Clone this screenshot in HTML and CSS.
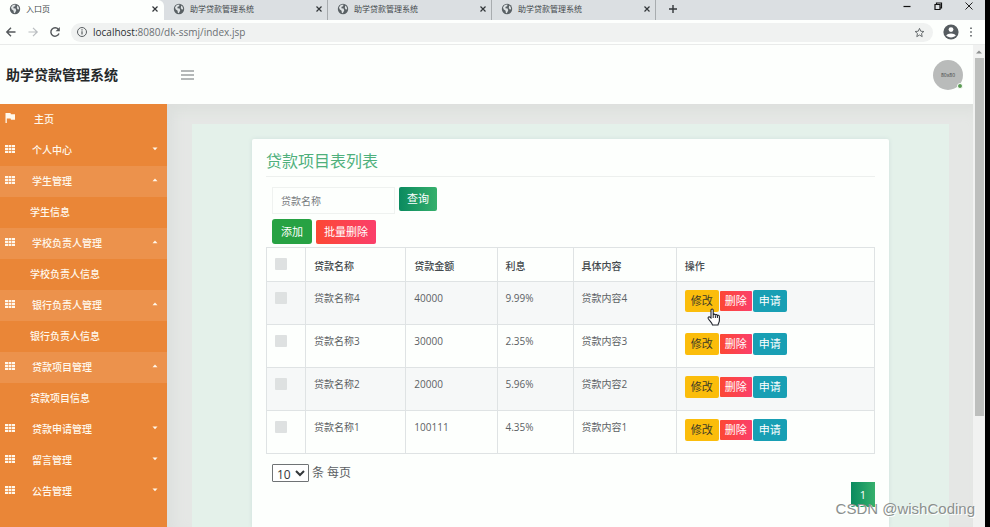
FILE: index.html
```html
<!DOCTYPE html>
<html lang="zh-CN">
<head>
<meta charset="utf-8">
<title>入口页</title>
<link rel="stylesheet" href="styles.css">
</head>
<body>
<svg class="defs" aria-hidden="true">
  <symbol id="globe" viewBox="0 0 12 12"><circle cx="6" cy="6" r="5.2" fill="#596064"/><path d="M2 4.2 3.8 2l2.6-.4-.2 1.6-1.6.6-.2 1.4 2.2.4.6 1.8-1.4 2.8-1-.4-.2-2L2.600 6.200zM8.200 2.600l1.400 1.200.6 2.400-1.400.2-1-1.400z" fill="#dfe3e5"/></symbol>
  <symbol id="x" viewBox="0 0 8 8"><path d="M1.500 1.500l5 5M6.500 1.500l-5 5" stroke="#33373a" stroke-width="1.200" fill="none"/></symbol>
  <symbol id="grid" viewBox="0 0 10 8"><path d="M0 0h3v2.200H0zM3.600 0h2.800v2.200H3.600zM7 0h3v2.200H7zM0 2.900h3v2.200H0zM3.600 2.900h2.800v2.200H3.600zM7 2.900h3v2.200H7zM0 5.800h3V8H0zM3.600 5.800h2.800V8H3.600zM7 5.800h3V8H7z" fill="#fff8ec"/></symbol>
  <symbol id="down" viewBox="0 0 6 4"><path d="M.5.5h5L3 3.200z" fill="#fff8ec"/></symbol>
  <symbol id="up" viewBox="0 0 6 4"><path d="M.5 3.200h5L3 .5z" fill="#fff8ec"/></symbol>
</svg>
<div class="screen">
  <div class="browser">
    <div class="tabs">
      <div class="tab active"><svg class="ico12"><use href="#globe"/></svg><span>入口页</span><button class="close" aria-label="关闭"><svg class="ico8"><use href="#x"/></svg></button></div>
      <div class="tab"><svg class="ico12"><use href="#globe"/></svg><span>助学贷款管理系统</span><button class="close" aria-label="关闭"><svg class="ico8"><use href="#x"/></svg></button></div>
      <div class="tab"><svg class="ico12"><use href="#globe"/></svg><span>助学贷款管理系统</span><button class="close" aria-label="关闭"><svg class="ico8"><use href="#x"/></svg></button></div>
      <div class="tab"><svg class="ico12"><use href="#globe"/></svg><span>助学贷款管理系统</span><button class="close" aria-label="关闭"><svg class="ico8"><use href="#x"/></svg></button></div>
      <button class="newtab" aria-label="新标签页"><svg width="10" height="10" viewBox="0 0 10 10"><path d="M5 1v8M1 5h8" stroke="#33373a" stroke-width="1.400"/></svg></button>
      <div class="winbtns">
        <button aria-label="最小化"><svg width="10" height="10" viewBox="0 0 10 10"><path d="M1.500 5.500h7" stroke="#111" stroke-width="1.200"/></svg></button>
        <button aria-label="还原"><svg width="10" height="10" viewBox="0 0 10 10"><path d="M2 3.500h5v5H2zM3.500 3.500V2h5v5H7" stroke="#111" stroke-width="1.200" fill="none"/></svg></button>
        <button aria-label="关闭窗口"><svg width="10" height="10" viewBox="0 0 10 10"><path d="M1.500 1.500l7 7M8.500 1.500l-7 7" stroke="#222" fill="none"/></svg></button>
      </div>
    </div>
    <div class="toolbar">
      <button aria-label="后退"><svg width="12" height="12" viewBox="0 0 12 12"><path d="M10.500 6H2M6 1.800 1.800 6 6 10.200" stroke="#54585b" stroke-width="1.400" fill="none"/></svg></button>
      <button aria-label="前进"><svg width="12" height="12" viewBox="0 0 12 12"><path d="M1.500 6H10M6 1.800 10.200 6 6 10.200" stroke="#b9bdc0" stroke-width="1.200" fill="none"/></svg></button>
      <button aria-label="刷新"><svg width="12" height="12" viewBox="0 0 12 12"><path d="M10 7.500A4.200 4.200 0 1 1 9.400 3.400" stroke="#54585b" stroke-width="1.400" fill="none"/><path d="M10.800 1v4.200H6.600z" fill="#54585b"/></svg></button>
      <div class="address">
        <svg width="12" height="12" viewBox="0 0 12 12"><circle cx="6" cy="6" r="4.500" stroke="#5b6063" fill="none"/><path d="M6 5.200v3.300M6 3.300v1.100" stroke="#5b6063" stroke-width="1.200"/></svg>
        <span class="url"><b>localhost:</b>8080/dk-ssmj/index.jsp</span>
        <svg width="11" height="11" viewBox="0 0 24 24"><path d="M12 3l2.700 6.200 6.800.6-5.100 4.500 1.500 6.700-5.900-3.500L6.100 21l1.500-6.700-5.100-4.500 6.800-.6z" stroke="#5b6063" stroke-width="2" fill="none"/></svg>
      </div>
      <svg class="user" width="16" height="16" viewBox="0 0 16 16"><circle cx="8" cy="8" r="7.600" fill="#565c60"/><circle cx="8" cy="5.600" r="2.400" fill="#fff"/><path d="M3.200 11.600C4.500 8.800 11.500 8.800 12.800 11.600 11 14 5 14 3.200 11.600z" fill="#fff"/></svg>
      <button aria-label="菜单"><svg width="4" height="12" viewBox="0 0 4 12"><path d="M1.200 1.500h1.600v1.600H1.200zM1.200 5.200h1.600v1.600H1.200zM1.200 8.900h1.600v1.600H1.200z" fill="#5b6063"/></svg></button>
    </div>
  </div>
  <div class="viewport">
    <div class="page">
      <header class="header">
        <h1>助学贷款管理系统</h1>
        <button class="burger" aria-label="切换菜单"><svg width="13" height="10" viewBox="0 0 13 10"><path d="M0 1h13M0 5h13M0 9h13" stroke="#6d7275" stroke-width="1.200"/></svg></button>
        <div class="avatar">80x80<i></i></div>
      </header>
      <div class="body">
        <nav class="sidebar">
          <a href="#" class="home"><svg class="flag" width="10" height="10" viewBox="0 0 10 10"><path d="M.5 0h5l.4 1.200H10v5.600H6l-.4-1.200H1.800V10H.5z" fill="#fff8ec"/></svg><span>主页</span></a>
          <a href="#"><svg class="grid"><use href="#grid"/></svg><span>个人中心</span><svg class="caret"><use href="#down"/></svg></a>
          <a href="#" class="open"><svg class="grid"><use href="#grid"/></svg><span>学生管理</span><svg class="caret"><use href="#up"/></svg></a>
          <a href="#" class="sub">学生信息</a>
          <a href="#" class="open"><svg class="grid"><use href="#grid"/></svg><span>学校负责人管理</span><svg class="caret"><use href="#up"/></svg></a>
          <a href="#" class="sub">学校负责人信息</a>
          <a href="#" class="open"><svg class="grid"><use href="#grid"/></svg><span>银行负责人管理</span><svg class="caret"><use href="#up"/></svg></a>
          <a href="#" class="sub">银行负责人信息</a>
          <a href="#" class="open"><svg class="grid"><use href="#grid"/></svg><span>贷款项目管理</span><svg class="caret"><use href="#up"/></svg></a>
          <a href="#" class="sub">贷款项目信息</a>
          <a href="#"><svg class="grid"><use href="#grid"/></svg><span>贷款申请管理</span><svg class="caret"><use href="#down"/></svg></a>
          <a href="#"><svg class="grid"><use href="#grid"/></svg><span>留言管理</span><svg class="caret"><use href="#down"/></svg></a>
          <a href="#"><svg class="grid"><use href="#grid"/></svg><span>公告管理</span><svg class="caret"><use href="#down"/></svg></a>
        </nav>
        <main class="content">
          <div class="panel">
            <section class="card">
              <h2>贷款项目表列表</h2>
              <form class="search"><input type="text" placeholder="贷款名称" aria-label="贷款名称"><button type="button" class="btn query">查询</button></form>
              <div class="actions"><button class="btn add">添加</button><button class="btn remove">批量删除</button></div>
              <table>
                <colgroup><col class="c1"><col class="c2"><col class="c3"><col class="c4"><col class="c5"><col></colgroup>
                <thead><tr><th><input type="checkbox" aria-label="全选"></th><th>贷款名称</th><th>贷款金额</th><th>利息</th><th>具体内容</th><th>操作</th></tr></thead>
                <tbody>
                  <tr><td><input type="checkbox" aria-label="选择贷款名称4"></td><td>贷款名称4</td><td>40000</td><td>9.99%</td><td>贷款内容4</td><td><div class="ops"><button class="edit">修改<svg class="cursor" width="14" height="18" viewBox="0 0 14 18"><path d="M4 10V2.200C4 .6 6.200.6 6.200 2.200V7c.2-1.200 2-1.100 2.200.2.300-1 1.900-.8 2 .5.500-.9 2-.5 2 .8v4c0 2-1.200 2.700-1.400 4.500H5.500C5.300 15 2.500 13 1.200 10.500.6 9 2.300 8.300 3 9.300z" fill="#fff" stroke="#20242c" stroke-width="1.100"/><path d="M6.200 7v3M8.400 7.300V10M10.400 7.800V10" stroke="#20242c"/></svg></button><button class="del">删除</button><button class="apply">申请</button></div></td></tr>
                  <tr><td><input type="checkbox" aria-label="选择贷款名称3"></td><td>贷款名称3</td><td>30000</td><td>2.35%</td><td>贷款内容3</td><td><div class="ops"><button class="edit">修改</button><button class="del">删除</button><button class="apply">申请</button></div></td></tr>
                  <tr><td><input type="checkbox" aria-label="选择贷款名称2"></td><td>贷款名称2</td><td>20000</td><td>5.96%</td><td>贷款内容2</td><td><div class="ops"><button class="edit">修改</button><button class="del">删除</button><button class="apply">申请</button></div></td></tr>
                  <tr><td><input type="checkbox" aria-label="选择贷款名称1"></td><td>贷款名称1</td><td>100111</td><td>4.35%</td><td>贷款内容1</td><td><div class="ops"><button class="edit">修改</button><button class="del">删除</button><button class="apply">申请</button></div></td></tr>
                </tbody>
              </table>
              <div class="pagesize"><select id="size"><option>10</option></select><label for="size">条 每页</label></div>
              <div class="pager"><a href="#">1</a></div>
            </section>
          </div>
        </main>
      </div>
    </div>
    <div class="scrollbar"><svg width="6" height="4" viewBox="0 0 6 4"><path d="M0 3.500h6L3 .5z" fill="#8b8e8d"/></svg><i></i></div>
  </div>
  <div class="watermark">CSDN @wishCoding</div>
</div>
</body>
</html>
```
FILE: styles.css
```css
* { box-sizing: border-box; }
body { margin: 0; background: #000; color: #5c6164; font: 10px/16px "Open Sans", "Noto Sans CJK SC", sans-serif; }
button, input, select { font: inherit; color: inherit; margin: 0; }
button { border: 0; padding: 0; background: none; display: flex; align-items: center; justify-content: center; }
a { color: inherit; text-decoration: none; }
svg { display: block; flex: none; }
.defs { display: none; }
.screen { position: relative; display: flex; flex-direction: column; height: 100vh; margin-right: 5px; overflow: hidden; background: #fdfffd; }

.tabs { display: flex; height: 20px; background: #dbdfe2; }
.tab { display: flex; align-items: center; width: 164px; padding: 0 4px 3px 9px; font-size: 8px; line-height: 12px; color: #44494c; border-right: 1px solid #a8acaf; }
.tab.active { background: #fdfffd; border-right-color: transparent; border-radius: 0 6px 0 0; }
.tab span { flex: 1; margin-left: 5px; }
.ico12 { width: 12px; height: 12px; }
.ico8 { width: 8px; height: 8px; }
.newtab { padding: 0 12px 3px; }
.winbtns { display: flex; gap: 21px; margin-left: auto; padding: 0 11px 8px 0; }
.toolbar { display: flex; align-items: center; gap: 10px; height: 25px; padding: 0 12px 0 5px; border-bottom: 1px solid #e9ebea; }
.address { flex: 1; display: flex; align-items: center; gap: 5px; height: 19px; padding: 0 8px 0 5px; border-radius: 10px; background: #f0f2f1; }
.url { flex: 1; color: #6b7073; }
.url b { font-weight: 400; color: #2b2f31; }

.viewport { flex: 1; display: flex; min-height: 0; }
.page { flex: 1; display: flex; flex-direction: column; min-width: 0; }
.header { display: flex; align-items: center; height: 59px; flex: none; padding: 0 10px 0 6px; }
h1 { width: 175px; margin: 0; font-size: 14px; line-height: 20px; font-weight: 700; color: #25282a; }
.avatar { position: relative; width: 30px; height: 30px; margin-left: auto; border-radius: 50%; background: #b9bbba; color: #3c3f40; font: 5px/30px "Open Sans", sans-serif; text-align: center; }
.avatar i { position: absolute; right: 0; bottom: 1px; width: 6px; height: 6px; border: 1px solid #fff; border-radius: 50%; background: #5a9b53; }

.body { flex: 1; display: flex; min-height: 0; }
.sidebar { width: 167px; background: #ea8637; color: #fff8ec; font-weight: 500; }
.sidebar a { display: flex; align-items: center; height: 31px; padding: 0 9px 2px 5px; }
.sidebar a span { flex: 1; margin-left: 17px; }
.sidebar .home span { margin-left: 19px; }
.sidebar .open { background: #ec924c; }
.sidebar .sub { padding-left: 30px; }
.grid { width: 10px; height: 8px; margin-bottom: 2px; }
.flag { margin-bottom: 2px; }
.caret { width: 6px; height: 4px; margin-bottom: 1px; }
.content { flex: 1; min-width: 0; padding: 20px 24px 0 25px; background: #e5e7e5; box-shadow: inset 0 14px 14px -8px #dcdfdc, inset 14px 0 14px -8px #dcdfdd; }
.panel { height: 100%; padding: 15px 60px 0; background: #e4f1ea; }
.card { min-height: 100%; padding: 12px 14px; border-radius: 2px 2px 0 0; background: #fdfffd; box-shadow: 0 0 4px #cfdfdc; }
h2 { margin: 0 0 10px; padding-bottom: 5px; border-bottom: 1px solid #edf0ee; font-size: 16px; line-height: 20px; font-weight: 400; color: #4fb07c; }
.search, .actions { display: flex; align-items: flex-start; gap: 4px; padding-left: 6px; }
.search input { width: 123px; height: 27px; padding: 0 8px; border: 1px solid #eff2f0; background: transparent; outline: 0; }
.search input::placeholder { color: #777b7e; opacity: 1; }
.btn { height: 24px; padding: 0 8px; border-radius: 2px; font-size: 11px; color: #fff; }
.query { background: linear-gradient(90deg, #0a8a5f, #36b06c); }
.actions { align-items: center; margin: 5px 0 3px; }
.add { height: 25px; padding: 0 9px; border-radius: 3px; background: #27a243; }
.remove { background: linear-gradient(90deg, #fc4834, #fb3f6b); }

table { width: 100%; table-layout: fixed; border-collapse: collapse; }
.c1 { width: 39px; }
.c2 { width: 16.5%; }
.c3 { width: 15%; }
.c4 { width: 12.5%; }
.c5 { width: 17%; }
th, td { border: 1px solid #dfe3e4; padding: 8px; text-align: left; vertical-align: top; }
th { height: 34px; padding-top: 10px; padding-bottom: 7px; font-weight: 500; color: #43494d; }
td { height: 43px; }
tbody tr:nth-child(odd) { background: #f6f8f8; }
input[type="checkbox"] { appearance: none; display: block; width: 12px; height: 12px; margin-top: 2px; border-radius: 1px; background: #dee1e1; }
th input[type="checkbox"] { margin-top: 0; }
.ops { display: flex; align-items: center; }
.ops button { height: 22px; padding: 0 6px; border-radius: 2px; font-size: 11px; color: #fff; }
.ops .edit { position: relative; margin-right: 1px; background: #fbbd0b; color: #3d3a26; }
.ops .del { height: 20px; padding: 0 5px; margin-right: 1px; border-radius: 1px; background: linear-gradient(90deg, #fc4834, #fb3f6b); }
.ops .apply { background: #189fb4; }
.cursor { position: absolute; left: 22px; top: 18px; z-index: 1; }
.pagesize { display: flex; align-items: center; gap: 3px; margin: 10px 0 0 6px; font-size: 12px; line-height: 16px; }
.pagesize select { width: 37px; height: 18px; padding: 0; border: 1px solid #6f7375; border-radius: 1px; background: #fff; color: #33373a; }
.pager { display: flex; justify-content: flex-end; }
.pager a { width: 24px; height: 25px; background: linear-gradient(90deg, #0a8a5f, #36b06c); color: #fff; font-size: 11px; line-height: 25px; text-align: center; }

.scrollbar { display: flex; flex-direction: column; align-items: center; gap: 4px; width: 12px; padding: 5px 1px 0; background: #f1f2f1; }
.scrollbar i { width: 9px; height: 75%; background: #bdbfbd; }
.watermark { position: absolute; right: 10px; bottom: 8px; color: #8b908e; font: 15px/20px "Liberation Sans", sans-serif; text-shadow: 1px 1px 0 #fff; }
```
